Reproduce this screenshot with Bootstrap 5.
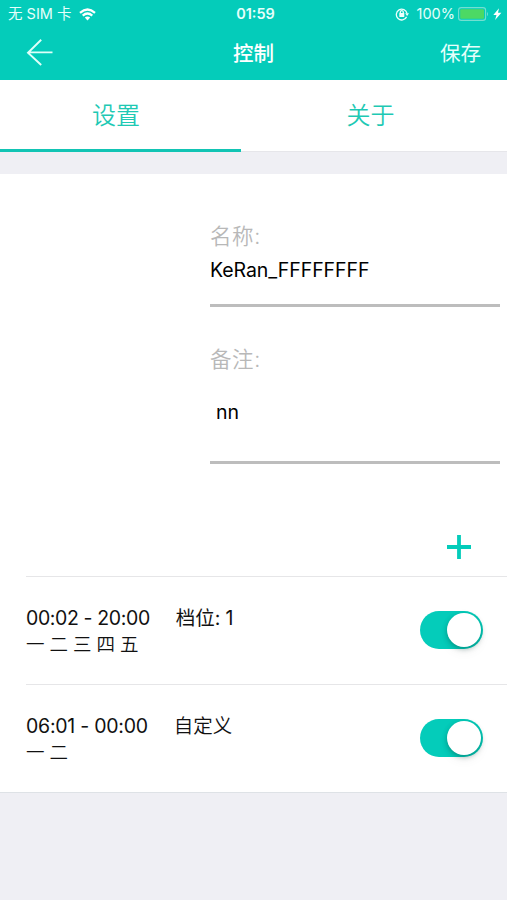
<!DOCTYPE html>
<html lang="zh-CN">
<head>
<meta charset="utf-8">
<meta name="viewport" content="width=device-width, initial-scale=1">
<title>控制</title>
<link href="https://cdn.jsdelivr.net/npm/bootstrap@5.3.0/dist/css/bootstrap.min.css" rel="stylesheet">
<style>
  :root { --teal: #04ccba; --canvas: #efeff4; --hair: #e6e6e8; }
  body { font-family: Inter, "Noto Sans CJK SC", sans-serif; background: var(--canvas); color: #111; min-height: 900px; overflow: hidden; }
  .app-head { background: var(--teal); height: 80px; color: #e6fffb; }
  .status { height: 28px; font-size: 14.5px; line-height: 28px; padding: 0 5px 0 8px; }
  .side { flex: 1 1 0; }
  .clock { padding-left: 1px; }
  .battery { margin-left: 3px; }
  .title-row { height: 52px; padding: 0 26px 4px 26px; font-size: 20.5px; line-height: 48px; }
  .page-title { font-weight: 500; padding-top: 3px; color: #fff; }
  .save-link { padding-top: 3px; }
  .tabs-row { height: 72px; border-bottom: 1px solid #e6e6ea; }
  .tab-btn { color: #1ec9b4; font-size: 24px; font-weight: 350; line-height: 72px; height: 72px; border: 0; border-bottom: 3px solid transparent; padding: 0; text-align: center; text-decoration: none; }
  .tab-btn.active { border-color: #12c4b4; }
  .tab-first { width: 241px; padding-right: 9px; }
  .tab-second { padding-right: 7px; }
  .form-area { margin-top: 22px; height: 402px; padding: 46px 7px 0 210px; }
  .label-text { color: #b8b8b8; font-size: 21.5px; font-weight: 350; line-height: 32px; letter-spacing: .6px; }
  .value-text { font-size: 19.5px; line-height: 37px; letter-spacing: -.06px; color: #000; }
  .ruled { border-bottom: 3px solid #bdbdbd; }
  .name-field { height: 87px; }
  .note-field { height: 157px; padding-top: 36px; }
  .note-field .value-text { padding: 19px 0 0 6px; }
  .add-row { padding-top: 71px; padding-right: 29px; }
  .plan { height: 108px; margin-left: 26px; padding: 28px 24px 0 0; border-top: 1px solid var(--hair); font-size: 19.5px; line-height: 26px; }
  .plan-time { letter-spacing: -.38px; }
  .plan-time.second { letter-spacing: -.25px; }
  .plan-kind { margin-left: 26px; letter-spacing: -.1px; }
  .plan-kind.custom { margin-left: 26px; letter-spacing: 0; }
  .days { font-size: 18.5px; letter-spacing: -.1px; }
  .days, .plan-kind.custom { font-weight: 350; }
  .toggle { width: 63px; height: 38px; border-radius: 19px; background: var(--teal); padding: 2px; margin-top: 6px; }
  .knob { width: 34px; height: 34px; background: #fff; border-radius: 50%; box-shadow: 0 2px 5px rgba(0,60,50,.34), 0 5px 12px rgba(0,0,0,.05); }
  svg { display: block; }
</style>
</head>
<body>
<header class="app-head">
  <div class="status d-flex align-items-center">
    <div class="side d-flex align-items-center">
      <span>无 SIM 卡</span>
      <svg class="ms-2" width="17" height="13" viewBox="0 0 17 13" fill="none" stroke="#fff" stroke-width="2.2"><path d="M1 4.800Q8.500-1.800 16 4.800M3.700 7.600Q8.500 3.400 13.300 7.600"/><path d="M5.800 9.600Q8.500 7.200 11.200 9.600L8.500 12.400Z" fill="#fff" stroke="none"/></svg>
    </div>
    <span class="clock fw-semibold">01:59</span>
    <div class="side d-flex align-items-center justify-content-end">
      <svg width="14" height="14" viewBox="0 0 14 14" fill="none" stroke="#effffc" stroke-width="1.300"><path d="M11.600 9.900A5.400 5.400 0 1 1 12 6.400"/><path d="M10.200 6.200H14L12.100 8.900Z" fill="#effffc" stroke="none"/><path d="M5.300 6.400V5.200a1.500 1.500 0 0 1 3 0v1.200"/><rect x="4.300" y="6.100" width="5" height="3.900" rx=".5" fill="#effffc" stroke="none"/></svg>
      <span class="ms-2">100%</span>
      <svg class="battery" width="31" height="14" viewBox="0 0 31 14"><rect x=".6" y=".6" width="27" height="12.800" rx="2.700" fill="none" stroke="#73dfd1" stroke-width="1.100"/><rect x="2.200" y="2.200" width="23.800" height="9.600" rx="1.200" fill="#4cd964"/><path d="M29 4.700q2 2.300 0 4.600z" fill="#73dfd1"/></svg>
      <svg class="ms-1" width="9" height="12" viewBox="0 0 9 12" fill="#fff"><path d="M6 .2.300 6.900h3.200L2.100 11.900 8.400 4.800H5Z"/></svg>
    </div>
  </div>
  <div class="title-row d-flex align-items-center">
    <div class="side"><svg width="27" height="28" viewBox="0 0 27 28" fill="none" stroke="#dffff9" stroke-width="1.900"><path d="M15.200 1.700 2 14.700 15.200 27M2.200 14.400H26.500"/></svg></div>
    <span class="page-title">控制</span>
    <div class="side save-link text-end">保存</div>
  </div>
</header>
<nav class="tabs-row bg-white d-flex">
  <a class="tab-btn tab-first active" href="#">设置</a>
  <a class="tab-btn tab-second flex-fill" href="#">关于</a>
</nav>
<main>
  <section class="form-area bg-white">
    <div class="name-field ruled">
      <div class="label-text">名称:</div>
      <div class="value-text">KeRan_FFFFFFFF</div>
    </div>
    <div class="note-field ruled">
      <div class="label-text">备注:</div>
      <div class="value-text">nn</div>
    </div>
    <div class="add-row d-flex justify-content-end">
      <svg width="24" height="24" viewBox="0 0 24 24" stroke="#04ccba" stroke-width="3.800"><path d="M12 0V24M0 12H24"/></svg>
    </div>
  </section>
  <section class="bg-white border-bottom">
    <div class="plan d-flex justify-content-between">
      <div>
        <div><span class="plan-time">00:02 - 20:00</span><span class="plan-kind">档位: 1</span></div>
        <div class="days">一 二 三 四 五</div>
      </div>
      <div class="toggle d-flex justify-content-end" role="switch" aria-checked="true"><div class="knob"></div></div>
    </div>
    <div class="plan d-flex justify-content-between">
      <div>
        <div><span class="plan-time second">06:01 - 00:00</span><span class="plan-kind custom">自定义</span></div>
        <div class="days">一 二</div>
      </div>
      <div class="toggle d-flex justify-content-end" role="switch" aria-checked="true"><div class="knob"></div></div>
    </div>
  </section>
</main>
<script src="https://cdn.jsdelivr.net/npm/bootstrap@5.3.0/dist/js/bootstrap.bundle.min.js"></script>
</body>
</html>
